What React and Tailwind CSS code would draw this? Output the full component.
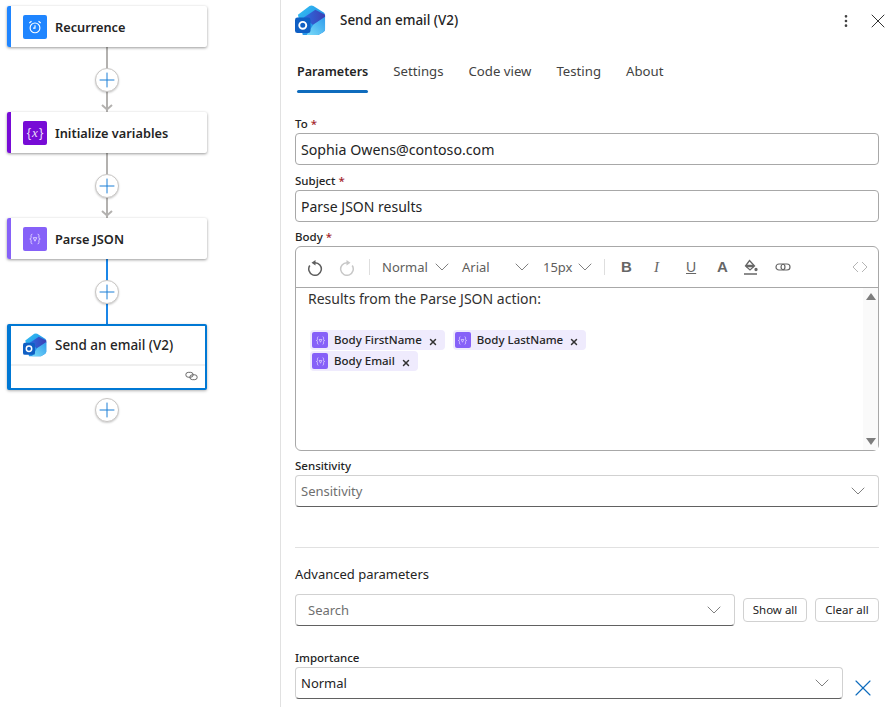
import React from "react";
import { ChevronDown, X, Plus, MoreVertical } from "lucide-react";

const font = "font-['Noto_Sans','Open_Sans',sans-serif]";

const OutlookIcon = ({ size }) => (
  <svg width={size} height={size} viewBox="0 0 32 32">
    <defs>
      <linearGradient id={`ol-a-${size}`} x1="0" y1="0" x2="1" y2="1">
        <stop offset="0" stopColor="#35c3f3" />
        <stop offset="1" stopColor="#1b78e2" />
      </linearGradient>
      <linearGradient id={`ol-b-${size}`} x1="0" y1="0" x2="1" y2="0">
        <stop offset="0" stopColor="#2a6ce0" />
        <stop offset="1" stopColor="#3d3fb4" />
      </linearGradient>
      <linearGradient id={`ol-c-${size}`} x1="0" y1="1" x2="1" y2="0">
        <stop offset="0" stopColor="#7adcf8" />
        <stop offset="1" stopColor="#2f9bec" />
      </linearGradient>
    </defs>
    <path d="M3 10 L15 1 Q17 0 19 1 L30 8 Q31 9 31 11 V25 Q31 27 29 28 L24 31 H8 Z" fill={`url(#ol-a-${size})`} />
    <path d="M9 13 L21 5 L31 10 V13 L19 21 Z" fill={`url(#ol-b-${size})`} />
    <path d="M19 20 L31 12 V25 Q31 27 29 28 L24 31 H12 Z" fill={`url(#ol-c-${size})`} />
    <rect x="0" y="13" width="16" height="16" rx="2.500" fill="#0f5fc4" />
    <circle cx="8" cy="21" r="3.600" fill="none" stroke="#fff" strokeWidth="2" />
  </svg>
);

const ClockIcon = () => (
  <svg width="14" height="14" viewBox="0 0 16 16" fill="none" stroke="#fff" strokeWidth="1.300">
    <circle cx="8" cy="9" r="5.600" />
    <path d="M8 6 V9.300 H5.800" />
    <path d="M1.500 3.500 L4 1.500 M14.500 3.500 L12 1.500" />
  </svg>
);

const VarIcon = () => (
  <span className="font-['Liberation_Sans',sans-serif] text-[13px] text-[#e9dcf8]">
    {"{"}
    <span className="mx-[1px] font-['Liberation_Serif',serif] italic">x</span>
    {"}"}
  </span>
);

const ParseIcon = ({ size = 14 }) => (
  <svg width={size} height={size} viewBox="0 0 16 16" fill="none" stroke="#e6dcff" strokeWidth="1">
    <path d="M5 2.500 Q3.500 2.500 3.500 4 V6.500 Q3.500 8 2 8 Q3.500 8 3.500 9.500 V12 Q3.500 13.500 5 13.500" />
    <path d="M11 2.500 Q12.500 2.500 12.500 4 V6.500 Q12.500 8 14 8 Q12.500 8 12.500 9.500 V12 Q12.500 13.500 11 13.500" />
    <path d="M6 6.500 L8 10.500 L10 6.500 Z" />
  </svg>
);

const RoundArrow = ({ flip, color }) => (
  <svg className={flip ? "-scale-x-100" : ""} width="16" height="17" viewBox="0 0 16 17" fill="none" stroke={color} strokeWidth="1.500">
    <path d="M8 3.700 A6.300 6.300 0 1 1 2.800 6.500" />
    <path d="M4.500 3.700 L8.500 1 V6.500 Z" fill={color} stroke="none" />
  </svg>
);

const ChainIcon = ({ color = "#666", offset = 0, width = 16, height = 12, className = "" }) => (
  <svg className={className} width={width} height={height} viewBox="0 0 16 12" fill="none" stroke={color} strokeWidth="1.200">
    <rect x="1" y={3 - offset} width="9" height="6" rx="3" />
    <rect x="6" y={3 + offset} width="9" height="6" rx="3" />
  </svg>
);

const Card = ({ accent, iconBg, icon, title }) => (
  <div className="relative z-10 flex h-[41px] w-[200px] items-center rounded-[2px] bg-white pl-[16px] shadow-[0_1px_3px_rgba(0,0,0,0.4)]">
    <div className={`absolute left-0 top-0 h-full w-[4px] rounded-l-[2px] ${accent}`} />
    <div className={`flex h-[24px] w-[24px] items-center justify-center rounded-[2px] ${iconBg}`}>{icon}</div>
    <span className="ml-[8px] mt-[2px] text-[12.750px] font-semibold text-[#242424]">{title}</span>
  </div>
);

const Connector = ({ blue, arrow, height = 65, line = true, top = "top-[21px]" }) => (
  <div className="relative flex w-[200px] justify-center" style={{ height }}>
    {line && <div className={`absolute bottom-0 top-0 w-[2px] ${blue ? "bg-[#1a86e8]" : "bg-[#b3b1af]"}`} />}
    {arrow && (
      <svg className="absolute bottom-[1px]" width="12" height="7" viewBox="0 0 12 7" fill="none" stroke="#b3b1af" strokeWidth="2">
        <path d="M1 1 L6 5.500 L11 1" />
      </svg>
    )}
    <div className={`absolute ${top} flex h-[24px] w-[24px] items-center justify-center rounded-full border border-[#c8c6c4] bg-white shadow-[0_1px_2px_rgba(0,0,0,0.2)]`}>
      <Plus size={24} strokeWidth={1} className="shrink-0 text-[#1a7fd6]" />
    </div>
  </div>
);

const Label = ({ children, required }) => (
  <div className="flex h-[15px] items-center text-[11.500px] font-medium leading-none text-[#242424]">
    {children}
    {required && <span className="ml-[3px] text-[#a4262c]">*</span>}
  </div>
);

const Input = ({ children, size }) => (
  <div className={`flex h-[32px] items-center rounded-[4px] border border-[#a8a8a8] px-[5px] pt-[1px] text-[#242424] ${size}`}>
    {children}
  </div>
);

const Select = ({ children, muted, pad = "pl-[5px]", className = "" }) => (
  <div
    className={`flex h-[32px] items-center justify-between rounded-[4px] border border-[#d1d1d1] border-b-[#616161] ${pad} pr-[8px] text-[13px] ${muted ? "text-[#6f6f6f]" : "text-[#242424]"} ${className}`}
  >
    <span className="mt-[2px]">{children}</span>
    <ChevronDown size={24} strokeWidth={1} className="text-[#808080]" />
  </div>
);

const Token = ({ children }) => (
  <span className="inline-flex h-[20px] items-center rounded-[4px] bg-[#efebfd] pl-[2px] pr-[7px] text-[11.500px] font-medium text-[#242424]">
    <span className="mr-[6px] flex h-[16px] w-[16px] items-center justify-center rounded-[2px] bg-[#8661f8]">
      <ParseIcon size={11} />
    </span>
    {children}
    <X size={10} strokeWidth={3.500} className="ml-[6px] mt-[4px] text-[#333]" />
  </span>
);

const Tab = ({ children, active }) => (
  <div className="relative flex h-[44px] items-center">
    <span className={`mt-[2px] ${active ? "text-[12.600px] font-semibold text-[#242424]" : "text-[13.200px] text-[#424242]"}`}>{children}</span>
    {active && <div className="absolute bottom-0 left-0 right-0 h-[3px] rounded-[2px] bg-[#0f6cbd]" />}
  </div>
);

const FontPick = ({ children, width }) => (
  <div className={`flex items-center justify-between text-[13px] text-[#605e5c] ${width}`}>
    <span className="mt-[2px]">{children}</span>
    <ChevronDown size={24} strokeWidth={1} className="text-[#808080]" />
  </div>
);

const Toolbar = () => (
  <div className="flex h-[41px] items-center border-b border-[#a8a8a8] pl-[11px] pr-[10px]">
    <RoundArrow color="#5f5f5f" />
    <span className="ml-[16px]"><RoundArrow flip color="#c8c8c8" /></span>
    <div className="ml-[14px] mr-[12px] h-[16px] w-px bg-[#dedede]" />
    <FontPick width="w-[72px]">Normal</FontPick>
    <FontPick width="ml-[8px] w-[72px]">Arial</FontPick>
    <FontPick width="ml-[9px] w-[54px]">15px</FontPick>
    <div className="ml-[7px] mr-[16px] h-[16px] w-px bg-[#dedede]" />
    <span className="w-[33px] font-['Liberation_Sans',sans-serif] text-[15px] font-bold text-[#666]">B</span>
    <span className="w-[32px] font-['Liberation_Serif',serif] text-[15px] italic text-[#666]">I</span>
    <span className="w-[31px] font-['Liberation_Sans',sans-serif] text-[14px] text-[#666] underline">U</span>
    <span className="w-[26px] font-['Liberation_Sans',sans-serif] text-[15px] font-bold text-[#666]">A</span>
    <svg width="16" height="16" viewBox="0 0 16 16" fill="none" stroke="#666" strokeWidth="1.300">
      <path d="M6.500 1.500 L11.500 7 L7 11 L2.500 7 Z" />
      <path d="M3 7 H11" strokeWidth="2.500" />
      <circle cx="13" cy="10.500" r="1" fill="#666" />
      <path d="M1 15 H14" strokeWidth="1.500" />
    </svg>
    <ChainIcon className="ml-[16px]" />
    <svg className="ml-auto" width="16" height="12" viewBox="0 0 16 12" fill="none" stroke="#b5b5b5" strokeWidth="1">
      <path d="M6 1 L1 6 L6 11 M10 1 L15 6 L10 11" />
    </svg>
  </div>
);

const Editor = () => (
  <div className="relative h-[205px] rounded-[6px] border border-[#a8a8a8]">
    <Toolbar />
    <div className="flex h-[162px]">
      <div className="flex-1 pl-[12px] pt-[1px] text-[14px] text-[#323130]">
        <div className="leading-[20px]">Results from the Parse JSON action:</div>
        <div className="mt-[21px] flex w-[300px] flex-wrap gap-x-[8px] gap-y-[1px] pl-[2px]">
          <Token>Body FirstName</Token>
          <Token>Body LastName</Token>
          <Token>Body Email</Token>
        </div>
      </div>
      <div className="flex w-[15px] flex-col items-center justify-between bg-[#fafafa] py-[5px]">
        <div className="h-0 w-0 border-x-[5px] border-b-[7px] border-x-transparent border-b-[#7d7d7d]" />
        <div className="h-0 w-0 border-x-[5px] border-t-[7px] border-x-transparent border-t-[#7d7d7d]" />
      </div>
    </div>
  </div>
);

const App = () => (
  <div className={`flex h-[707px] w-[891px] overflow-hidden bg-white ${font}`}>
    <div className="w-[281px] shrink-0 border-r border-[#e1e1e1] pl-[7px] pt-[6px]">
      <Card accent="bg-[#1f85ff]" iconBg="bg-[#1f85ff]" icon={<ClockIcon />} title="Recurrence" />
      <Connector arrow />
      <Card accent="bg-[#770bd6]" iconBg="bg-[#770bd6]" icon={<VarIcon />} title="Initialize variables" />
      <Connector arrow />
      <Card accent="bg-[#8661f8]" iconBg="bg-[#8661f8]" icon={<ParseIcon />} title="Parse JSON" />
      <Connector blue />
      <div className="relative z-10 h-[66px] w-[200px] rounded-[2px] border-2 border-l-4 border-[#0078d4] bg-white shadow-[0_1px_3px_rgba(0,0,0,0.3)]">
        <div className="flex h-[40px] items-center border-b-2 border-[#f0f0f0] pl-[12px]">
          <OutlookIcon size={24} />
          <span className="ml-[8px] text-[13.450px] font-medium text-[#242424]">Send an email (V2)</span>
        </div>
        <div className="flex justify-end pr-[7px] pt-[5px]">
          <ChainIcon color="#666" offset={1.500} width={13} height={10} />
        </div>
      </div>
      <Connector height={45} line={false} top="top-[8px]" />
    </div>

    <div className="flex-1 pl-[14px] pr-[12px]">
      <div className="flex h-[41px] items-center">
        <OutlookIcon size={31} />
        <span className="ml-[14px] text-[13.450px] font-medium text-[#242424]">Send an email (V2)</span>
        <MoreVertical size={16} strokeWidth={2} className="ml-auto text-[#424242]" />
        <X size={24} strokeWidth={1} className="ml-[12px] mr-[-11px] text-[#333]" />
      </div>
      <div className="flex gap-[25px] pl-[2px] pt-[8px]">
        <Tab active>Parameters</Tab>
        <Tab>Settings</Tab>
        <Tab>Code view</Tab>
        <Tab>Testing</Tab>
        <Tab>About</Tab>
      </div>

      <div className="mt-[23px]">
        <Label required>To</Label>
        <div className="mt-[2px]"><Input size="text-[14.200px]">Sophia Owens@contoso.com</Input></div>
      </div>
      <div className="mt-[8px]">
        <Label required>Subject</Label>
        <div className="mt-[2px]"><Input size="text-[14px]">Parse JSON results</Input></div>
      </div>
      <div className="mt-[7px]">
        <Label required>Body</Label>
        <div className="mt-[2px]"><Editor /></div>
      </div>
      <div className="mt-[7px]">
        <Label>Sensitivity</Label>
        <div className="mt-[2px]"><Select muted>Sensitivity</Select></div>
      </div>

      <div className="mt-[40px] h-px bg-[#e1e1e1]" />
      <div className="mt-[17px] text-[13px] leading-[18px] text-[#242424]">Advanced parameters</div>

      <div className="mt-[11px] flex items-center">
        <Select muted pad="pl-[12px]" className="w-[440px]">Search</Select>
        <button className="ml-[8px] h-[24px] w-[64px] rounded-[4px] border border-[#d1d1d1] text-[11.500px] text-[#242424]">Show all</button>
        <button className="ml-[8px] h-[24px] w-[64px] rounded-[4px] border border-[#d1d1d1] text-[11.500px] text-[#242424]">Clear all</button>
      </div>

      <div className="mt-[24px]">
        <Label>Importance</Label>
        <div className="mt-[2px] flex items-start">
          <Select className="w-[548px]">Normal</Select>
          <X size={28} strokeWidth={1} className="ml-[6px] mt-[7px] text-[#0f6cbd]" />
        </div>
      </div>
    </div>
  </div>
);

export default App;
